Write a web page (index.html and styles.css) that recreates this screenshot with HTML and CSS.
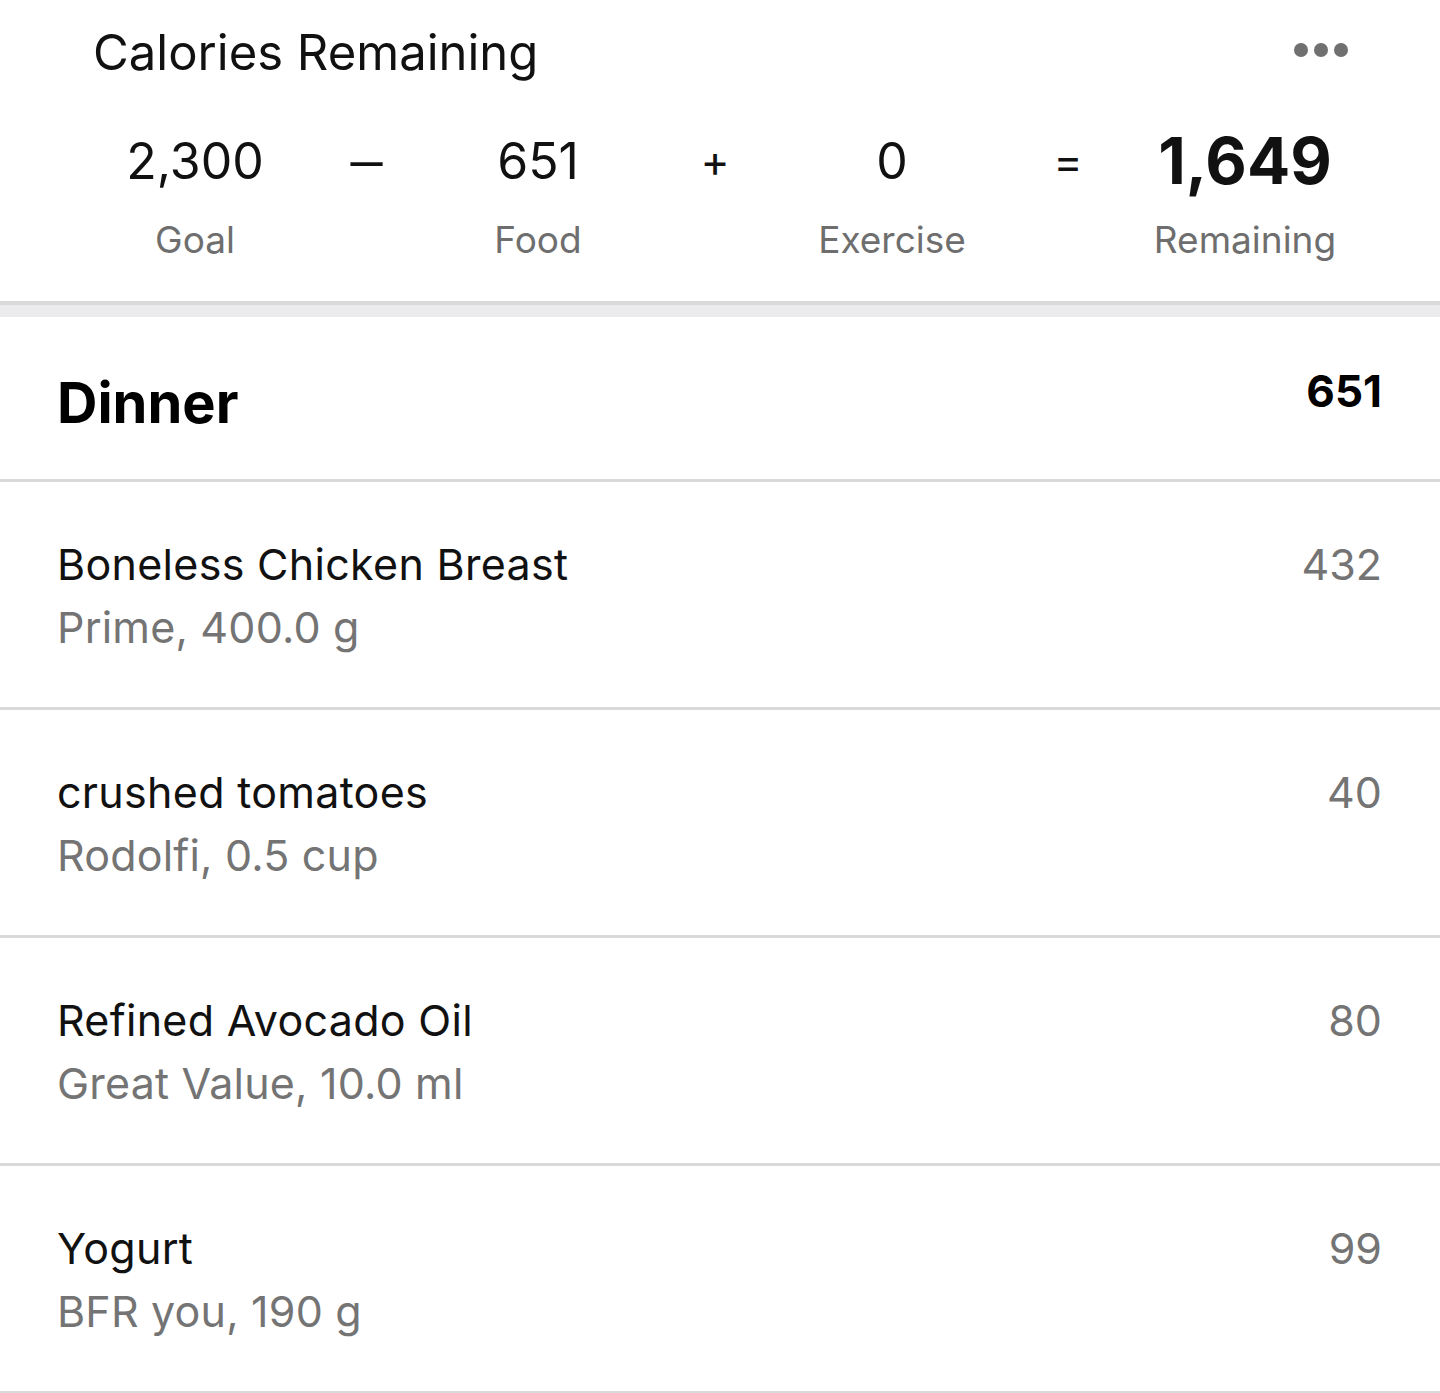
FILE: index.html
```html
<!DOCTYPE html>
<html lang="en">
<head>
  <meta charset="UTF-8">
  <title>Diary</title>
  <link rel="stylesheet" href="styles.css">
</head>
<body>
  <div class="summary">
    <div class="summary-head">
      <h2 class="summary-title">Calories Remaining</h2>
      <div class="dots"><span></span><span></span><span></span></div>
    </div>
    <div class="equation">
      <div class="term"><span class="num">2,300</span><span class="lbl">Goal</span></div>
      <div class="op"><span class="minus">&minus;</span></div>
      <div class="term"><span class="num">651</span><span class="lbl">Food</span></div>
      <div class="op">+</div>
      <div class="term"><span class="num">0</span><span class="lbl">Exercise</span></div>
      <div class="op">=</div>
      <div class="term result"><span class="num">1,649</span><span class="lbl">Remaining</span></div>
    </div>
  </div>

  <div class="meal">
    <div class="meal-head">
      <h1>Dinner</h1>
      <span class="meal-total">651</span>
    </div>

    <div class="entry">
      <div class="entry-info">
        <div class="entry-name">Boneless Chicken Breast</div>
        <div class="entry-sub">Prime, 400.0 g</div>
      </div>
      <div class="entry-cal">432</div>
    </div>

    <div class="entry">
      <div class="entry-info">
        <div class="entry-name">crushed tomatoes</div>
        <div class="entry-sub">Rodolfi, 0.5 cup</div>
      </div>
      <div class="entry-cal">40</div>
    </div>

    <div class="entry">
      <div class="entry-info">
        <div class="entry-name">Refined Avocado Oil</div>
        <div class="entry-sub">Great Value, 10.0 ml</div>
      </div>
      <div class="entry-cal">80</div>
    </div>

    <div class="entry">
      <div class="entry-info">
        <div class="entry-name">Yogurt</div>
        <div class="entry-sub">BFR you, 190 g</div>
      </div>
      <div class="entry-cal">99</div>
    </div>
  </div>
</body>
</html>
```

FILE: styles.css
```css
body {
  margin: 0;
  background-color: #ffffff;
  color: #000000;
  font-family: 'Inter', 'Roboto', sans-serif;
}

.summary {
  height: 305px;
  box-sizing: border-box;
  border-bottom: 4px solid #d9d9d9;
}

.summary-head {
  display: flex;
  justify-content: space-between;
  align-items: center;
  padding: 22px 92px 0 93px;
}

.summary-title {
  margin: 0;
  font-size: 49px;
  font-weight: 400;
  line-height: 62px;
  color: #111;
}

.dots {
  display: flex;
  gap: 6px;
  margin-top: -6px;
}

.dots span {
  width: 14px;
  height: 14px;
  border-radius: 50%;
  background-color: #707070;
}

/* columns are a little uneven in the app, so widths are set one by one */
.equation {
  display: grid;
  grid-template-columns: 176px 168px 174px 180px 174px 178px 176px;
  padding: 45px 0 0 107px;
  text-align: center;
}

.term {
  display: flex;
  flex-direction: column;
  align-items: center;
}

.num {
  font-size: 50px;
  line-height: 64px;
  color: #111;
}

.lbl {
  margin-top: 25px;
  font-size: 37px;
  line-height: 44px;
  color: #6e6e6e;
}

.op {
  font-size: 44px;
  line-height: 64px;
  color: #111;
}

.minus {
  display: inline-block;
  transform: scaleX(1.6);
}

.result .num {
  font-size: 64px;
  font-weight: 700;
}

.result .lbl {
  margin-top: 25px;
}

.meal {
  border-top: 12px solid #ebebee;
}

.meal-head {
  display: flex;
  justify-content: space-between;
  align-items: flex-start;
  height: 162px;
  padding: 0 58px 0 57px;
  border-bottom: 3px solid #d9d9d9;
}

.meal-head h1 {
  margin: 0;
  padding-top: 51px;
  font-size: 56px;
  font-weight: 700;
  line-height: 70px;
}

.meal-total {
  padding-top: 47px;
  font-size: 44px;
  font-weight: 700;
  line-height: 54px;
}

.entry {
  display: flex;
  justify-content: space-between;
  align-items: flex-start;
  height: 225px;
  padding: 0 58px 0 57px;
  border-bottom: 3px solid #d9d9d9;
}

.entry-info {
  padding-top: 55px;
}

.entry-name {
  font-size: 43px;
  line-height: 54px;
  letter-spacing: 0.3px;
  color: #111;
}

.entry-sub {
  margin-top: 9px;
  font-size: 43px;
  line-height: 54px;
  letter-spacing: 0.2px;
  color: #747474;
}

.entry-cal {
  padding-top: 55px;
  font-size: 43px;
  line-height: 54px;
  color: #747474;
}
```
